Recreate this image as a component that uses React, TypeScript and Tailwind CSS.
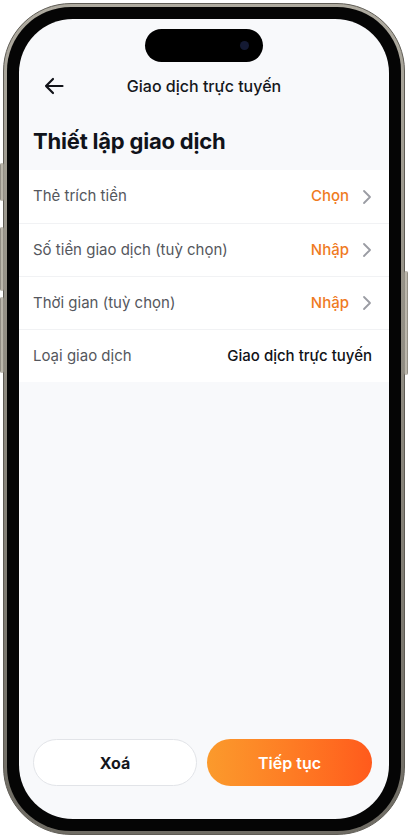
import type { ReactNode } from "react";

type Row = {
  label: string;
  value: string;
  action?: boolean;
};

const rows: Row[] = [
  { label: "Thẻ trích tiền", value: "Chọn", action: true },
  { label: "Số tiền giao dịch (tuỳ chọn)", value: "Nhập", action: true },
  { label: "Thời gian (tuỳ chọn)", value: "Nhập", action: true },
  { label: "Loại giao dịch", value: "Giao dịch trực tuyến" },
];

function Chevron() {
  return (
    <svg width="10" height="16" viewBox="0 0 10 16" fill="none" className="ml-[13px]">
      <path d="M2 2l6 6-6 6" stroke="#9a9ca3" strokeWidth="1.8" strokeLinecap="round" strokeLinejoin="round" />
    </svg>
  );
}

function BackArrow() {
  return (
    <svg width="20" height="18" viewBox="0 0 20 18" fill="none">
      <path d="M18.5 9H2M9 2L2 9l7 7" stroke="#111318" strokeWidth="2.2" strokeLinecap="round" strokeLinejoin="round" />
    </svg>
  );
}

function SideButton({ className }: { className: string }): ReactNode {
  return <div className={`absolute w-[4px] rounded-[2px] bg-gradient-to-r from-[#7f7b72] via-[#cfcbbf] to-[#7f7b72] ${className}`} />;
}

export default function App() {
  return (
    <div className="h-[837px] w-[408px] overflow-hidden bg-white p-[3px] font-['Inter','Noto_Sans',sans-serif]">
      <div className="relative">
        <SideButton className="-left-[3px] top-[160px] h-[38px]" />
        <SideButton className="-left-[3px] top-[224px] h-[64px]" />
        <SideButton className="-left-[3px] top-[294px] h-[76px]" />
        <SideButton className="-right-[3px] top-[268px] h-[104px]" />

        <div className="h-[832px] w-[402px] rounded-[68px] border border-[#5f5c55] bg-gradient-to-b from-[#aeaa9f] via-[#8c887e] to-[#6f6c64] p-[3px]">
          <div className="h-full w-full rounded-[64px] bg-[#050505] p-[12px]">
            <div className="flex h-full w-full flex-col overflow-hidden rounded-[54px] bg-[#f8f9fb]">
              <div className="mx-auto mt-[10px] flex h-[33px] w-[118px] items-center justify-end rounded-full bg-black pr-[14px]">
                <div className="h-[9px] w-[9px] rounded-full bg-[#141a33]" />
              </div>

              <div className="relative mt-[2px] flex h-[44px] items-center justify-center">
                <div className="absolute left-[25px] top-[13px]">
                  <BackArrow />
                </div>
                <span className="text-[16px] font-medium text-[#15171c]">Giao dịch trực tuyến</span>
              </div>

              <h1 className="ml-[14px] mt-[18px] text-[22px] font-bold leading-[30px] tracking-[-0.2px] text-[#10131a]">
                Thiết lập giao dịch
              </h1>

              <div className="mt-[14px] bg-white">
                {rows.map((row, i) => (
                  <div
                    key={row.label}
                    className={`flex h-[53px] items-center justify-between pl-[14px] pr-[17px] ${i > 0 ? "border-t border-[#f1f2f4]" : ""}`}
                  >
                    <span className="text-[15px] text-[#55575d]">{row.label}</span>
                    {row.action ? (
                      <div className="flex items-center">
                        <span className="text-[15px] font-medium text-[#ef7b1f]">{row.value}</span>
                        <Chevron />
                      </div>
                    ) : (
                      <span className="text-[15px] font-medium text-[#111318]">{row.value}</span>
                    )}
                  </div>
                ))}
              </div>

              <div className="mt-auto flex gap-[10px] pb-[33px] pl-[14px] pr-[16px]">
                <button
                  type="button"
                  className="h-[47px] w-[164px] rounded-full border border-[#e2e4e8] bg-white text-[16px] font-bold text-[#15171c]"
                >
                  Xoá
                </button>
                <button
                  type="button"
                  className="h-[47px] w-[165px] rounded-full bg-gradient-to-r from-[#fb9a2c] to-[#ff5a1c] text-[16px] font-semibold text-white"
                >
                  Tiếp tục
                </button>
              </div>
            </div>
          </div>
        </div>
      </div>
    </div>
  );
}
